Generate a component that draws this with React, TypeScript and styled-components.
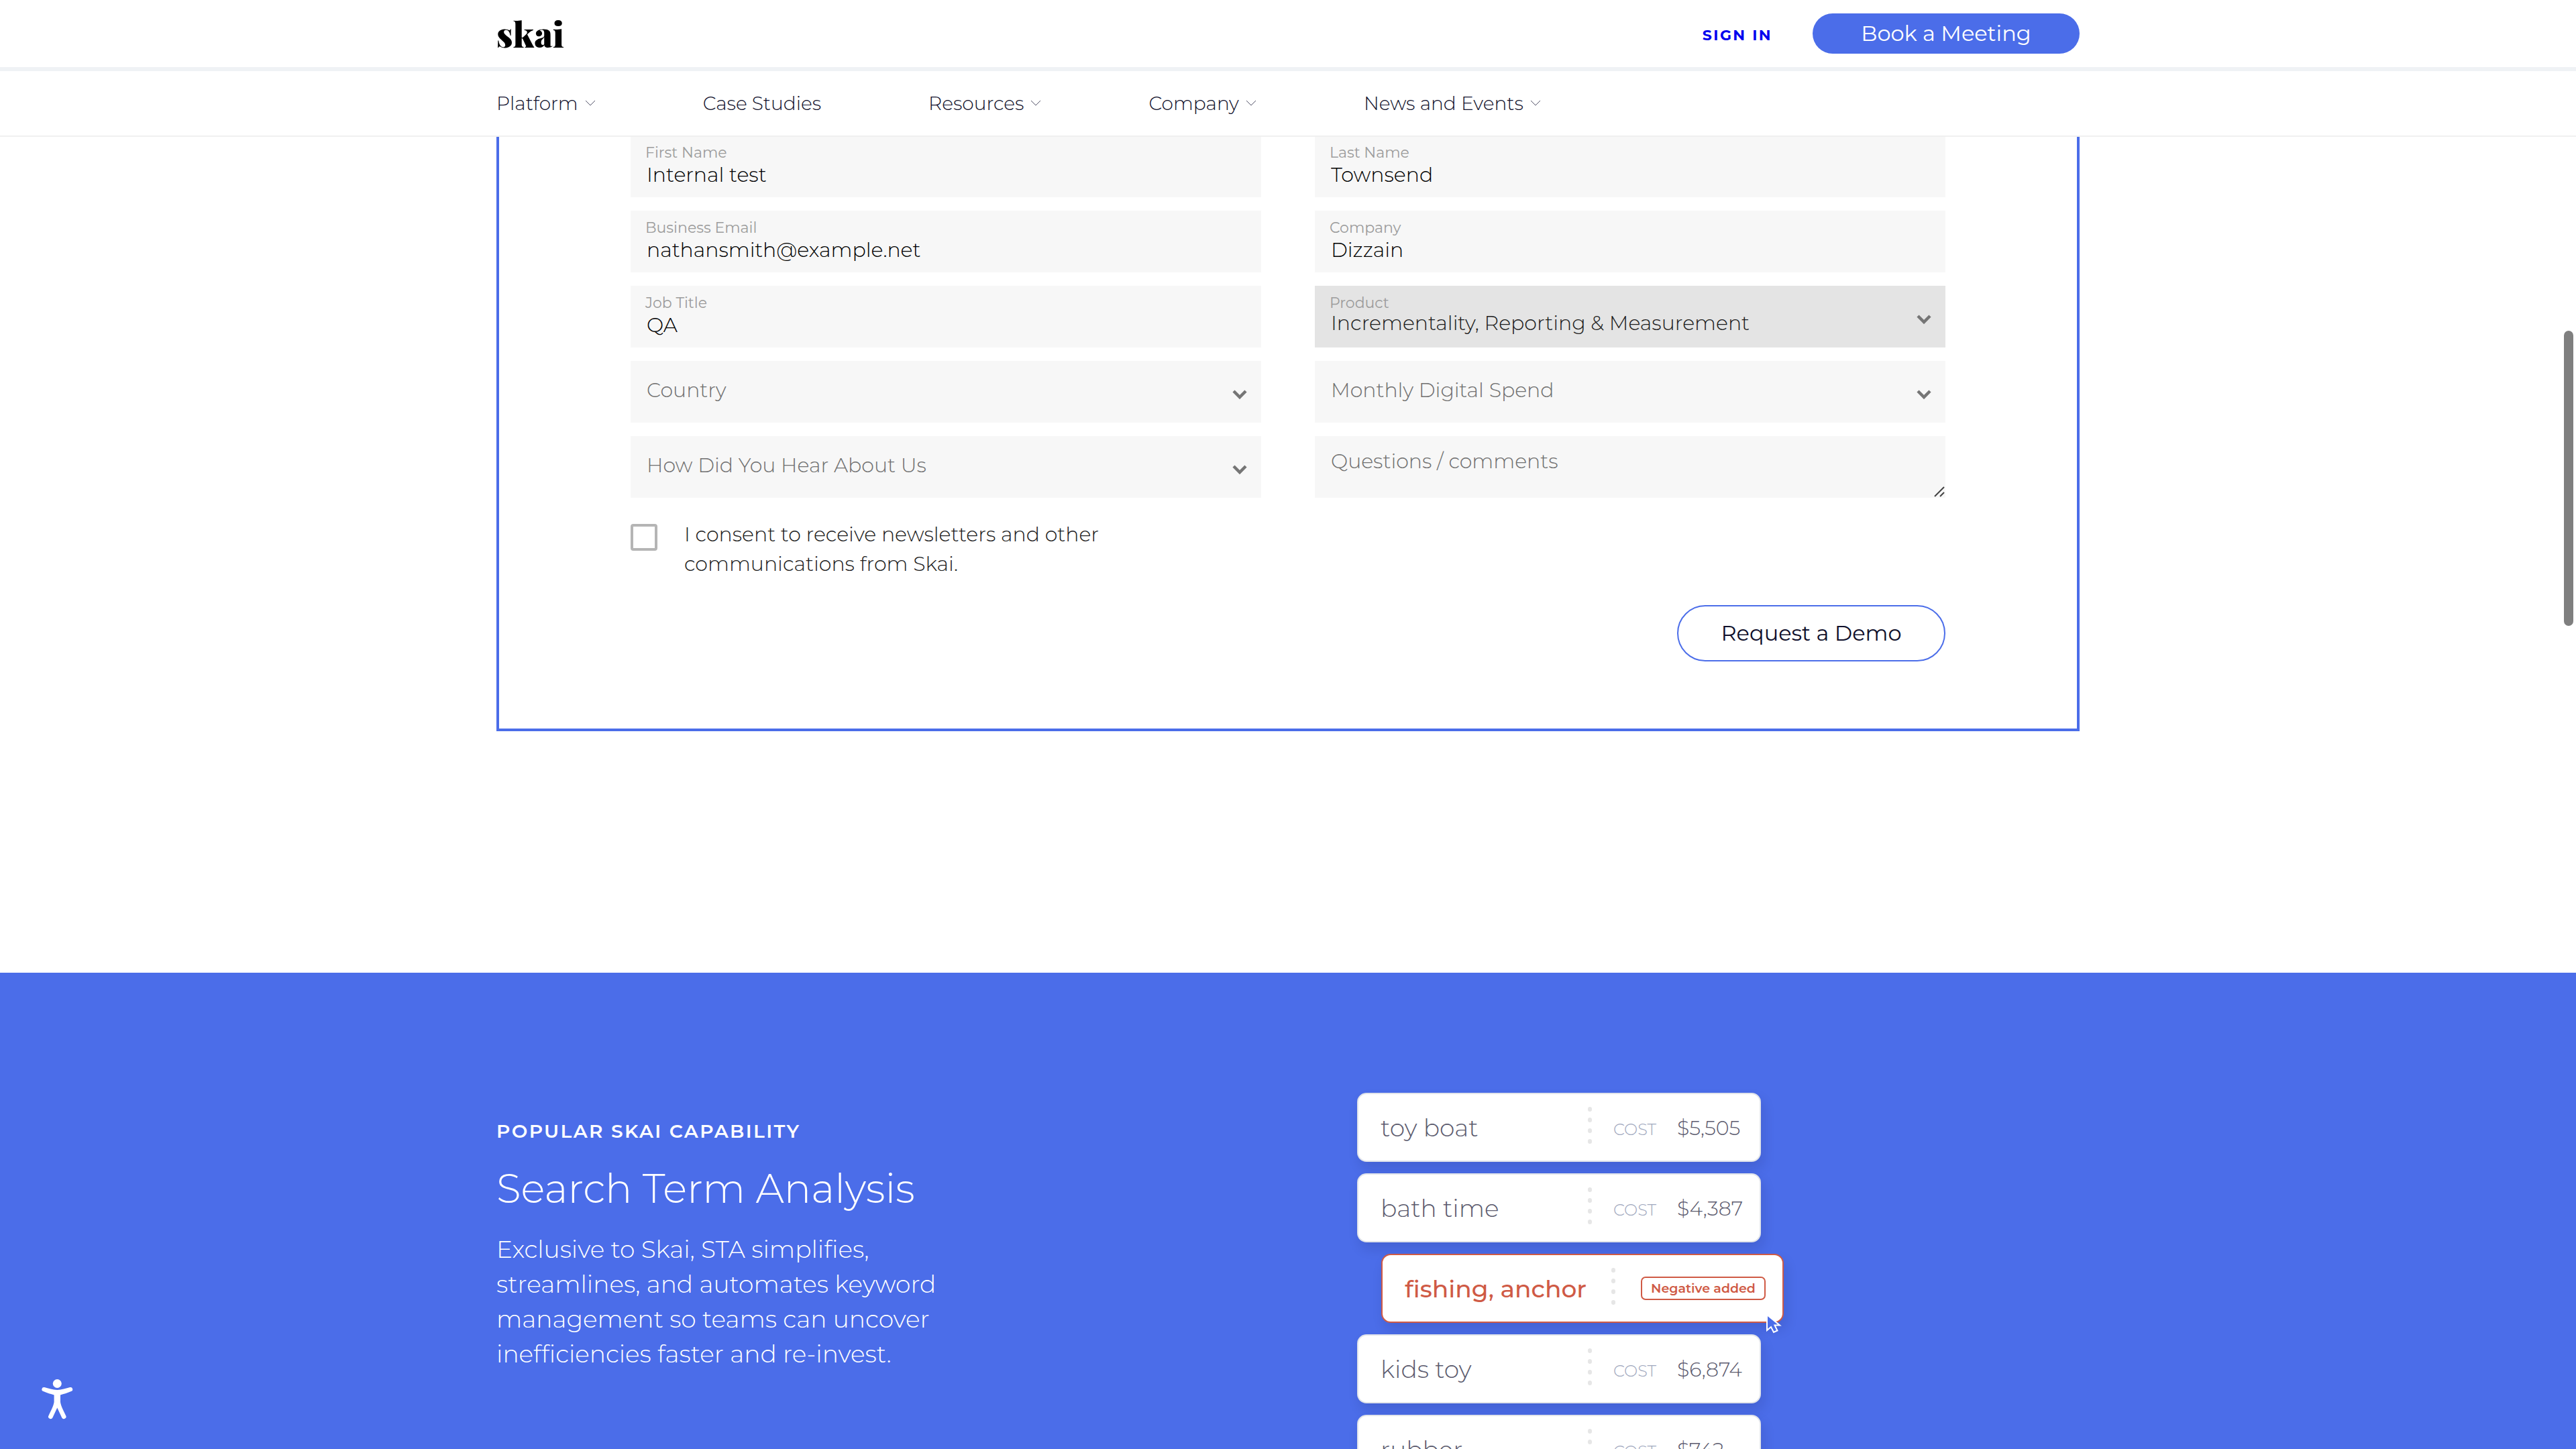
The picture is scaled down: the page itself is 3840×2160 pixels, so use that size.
import React from "react";
import styled, { createGlobalStyle } from "styled-components";

const color = {
  brand: "#4b6de9",
  ink: "#10102b",
  field: "#f7f7f7",
  fieldActive: "#e4e4e4",
  label: "#9c9c9c",
  placeholder: "#707070",
  danger: "#cf5a45",
};

const weight = {
  light: 300,
  book: 350,
  button: 450,
  medium: 500,
  semibold: 600,
  bold: 700,
};

const GlobalStyle = createGlobalStyle`
  *, *::before, *::after { box-sizing: border-box; }
  html, body { margin: 0; padding: 0; }
  body {
    background: #ffffff;
    color: ${color.ink};
    font-family: Montserrat, Inter, "Open Sans", sans-serif;
    overflow: hidden;
  }
  h2, p { margin: 0; }
  button, input, select, textarea { font: inherit; }
`;

const Page = styled.div`
  height: 100vh;
  overflow: hidden;
`;

const Container = styled.div`
  width: calc(100% - 80px);
  max-width: 2360px;
  margin: 0 auto;
`;

/* Header */

const Header = styled.header`
  position: sticky;
  top: 0;
  z-index: 2;
  background: #ffffff;
  border-bottom: 2px solid #f0f0f0;
`;

const TopBar = styled.div`
  border-bottom: 6px solid #eff2f5;
`;

const TopBarRow = styled(Container)`
  display: flex;
  align-items: center;
  justify-content: space-between;
  height: 100px;
`;

const Logo = styled.a`
  color: #000000;
  font-family: "Playfair Display", "Liberation Serif", serif;
  font-size: 52px;
  font-weight: 900;
  line-height: 60px;
  text-decoration: none;
`;

const Actions = styled.div`
  display: flex;
  align-items: center;
  gap: 60px;
`;

const SignIn = styled.a`
  padding-top: 5px;
  color: #0000ee;
  font-size: 22px;
  font-weight: ${weight.bold};
  line-height: 28px;
  letter-spacing: 0.11em;
  text-decoration: none;
`;

const MeetingButton = styled.button`
  width: 398px;
  height: 60px;
  padding: 0;
  border: 0;
  border-radius: 30px;
  background: ${color.brand};
  color: #ffffff;
  font-size: 32px;
  font-weight: ${weight.button};
  line-height: 40px;
`;

const Nav = styled.nav`
  height: 96px;
`;

const NavList = styled(Container)`
  display: flex;
  align-items: center;
  gap: 160px;
  height: 100%;
`;

const NavLink = styled.a`
  display: flex;
  align-items: center;
  gap: 10px;
  color: ${color.ink};
  font-size: 28px;
  font-weight: ${weight.book};
  line-height: 36px;
  text-decoration: none;
  white-space: nowrap;
`;

/* Demo form */

const FormPanel = styled(Container)`
  margin-top: -2px;
  padding: 0 196px 100px;
  border: 4px solid ${color.brand};
  border-top: 0;
`;

const Fields = styled.div`
  display: grid;
  grid-template-columns: 1fr 1fr;
  gap: 20px 80px;
`;

const Field = styled.div`
  position: relative;
  height: 92px;
`;

const FieldLabel = styled.label`
  position: absolute;
  top: 15px;
  left: 22px;
  color: ${color.label};
  font-size: 22px;
  line-height: 22px;
`;

const controlStyle = `
  display: block;
  width: 100%;
  height: 100%;
  margin: 0;
  border: 0;
  border-radius: 0;
  outline: 0;
  font-size: 30px;
  font-weight: ${weight.book};
  line-height: 36px;
`;

const TextInput = styled.input`
  ${controlStyle}
  padding: 24px 24px 0;
  background: ${color.field};
  color: #000000;
`;

const Select = styled.select<{ $active?: boolean }>`
  ${controlStyle}
  appearance: none;
  padding: ${(p) => (p.$active ? "20px 80px 0 24px" : "0 80px 4px 24px")};
  background: ${(p) => (p.$active ? color.fieldActive : color.field)};
  color: ${(p) => (p.$active ? "#1c1c1c" : color.placeholder)};
`;

const TextArea = styled.textarea`
  ${controlStyle}
  padding: 20px 24px;
  background: ${color.field};
  color: #000000;
  resize: none;
  overflow: hidden;
  &::placeholder {
    color: ${color.placeholder};
    opacity: 1;
  }
`;

const SelectArrow = styled.svg`
  position: absolute;
  right: 20px;
  bottom: 34px;
  pointer-events: none;
`;

const ResizeGrip = styled.svg`
  position: absolute;
  right: 1px;
  bottom: 1px;
  pointer-events: none;
`;

const Consent = styled.label`
  display: grid;
  grid-template-columns: 40px 640px;
  gap: 40px;
  margin-top: 33px;
  color: #1c1c1c;
  font-size: 30px;
  font-weight: ${weight.book};
  line-height: 44px;
`;

const Checkbox = styled.input`
  appearance: none;
  width: 40px;
  height: 40px;
  margin: 6px 0 0;
  border: 4px solid #b5b5b5;
  border-radius: 4px;
  background: #ffffff;
`;

const SubmitRow = styled.div`
  display: flex;
  justify-content: flex-end;
  margin-top: 39px;
`;

const SubmitButton = styled.button`
  width: 400px;
  height: 84px;
  padding: 0;
  border: 2px solid ${color.brand};
  border-radius: 42px;
  background: #ffffff;
  color: ${color.ink};
  font-size: 32px;
  font-weight: ${weight.button};
  line-height: 40px;
`;

/* Capability section */

const Capability = styled.section`
  margin-top: 360px;
  padding: 179px 0;
  background: ${color.brand};
  color: #ffffff;
`;

const CapabilityGrid = styled(Container)`
  display: grid;
  grid-template-columns: 1fr 1fr;
  align-items: start;
`;

const Copy = styled.div`
  display: grid;
  justify-items: start;
  padding-top: 39px;
`;

const Eyebrow = styled.p`
  font-size: 28px;
  font-weight: ${weight.semibold};
  line-height: 36px;
  letter-spacing: 0.085em;
  text-transform: uppercase;
`;

const Title = styled.h2`
  margin-top: 32px;
  font-size: 60px;
  font-weight: ${weight.light};
  line-height: 72px;
`;

const Lead = styled.p`
  max-width: 680px;
  margin-top: 28px;
  font-size: 36px;
  font-weight: ${weight.light};
  line-height: 52px;
  font-variant-ligatures: none;
`;

const TermList = styled.ul`
  display: grid;
  gap: 17px;
  margin: 0;
  padding: 0 0 0 103px;
  list-style: none;
`;

const Term = styled.li<{ $negative?: boolean }>`
  position: relative;
  display: grid;
  grid-template-columns: ${(p) => (p.$negative ? "308px" : "309px")} 38px 95px auto;
  align-items: center;
  width: ${(p) => (p.$negative ? "600px" : "602px")};
  height: 103px;
  margin-left: ${(p) => (p.$negative ? "36px" : "0")};
  padding-left: 33px;
  border: 2px solid ${(p) => (p.$negative ? color.danger : "#e1e4ea")};
  border-radius: 14px;
  background: #ffffff;
  box-shadow: 4px 10px 18px rgba(20, 20, 60, 0.12);
  color: ${(p) => (p.$negative ? color.danger : "#5c5b6e")};
  font-weight: ${(p) => (p.$negative ? weight.medium : weight.light)};
`;

const TermName = styled.span`
  font-size: 36px;
  line-height: 44px;
`;

const CostLabel = styled.span`
  padding-top: 6px;
  color: #9fa8bd;
  font-size: 24px;
  line-height: 30px;
`;

const Price = styled.span`
  padding-top: 3px;
  font-size: 30px;
  line-height: 36px;
`;

const Dots = styled.span`
  display: grid;
  gap: 9px;
  width: 6px;
  margin-bottom: 6px;
  &::before, &::after { content: ""; }
  &::before, &::after, i {
    display: block;
    height: 7px;
    border-radius: 3px;
    background: #e6e6e6;
  }
`;

const Badge = styled.span`
  grid-column: 3 / -1;
  justify-self: end;
  width: 186px;
  margin-right: 25px;
  border: 2px solid ${color.danger};
  border-radius: 7px;
  font-size: 19px;
  font-weight: ${weight.semibold};
  line-height: 31px;
  text-align: center;
`;

const Cursor = styled.svg`
  position: absolute;
  right: 1px;
  bottom: -20px;
`;

/* Overlays */

const AccessibilityButton = styled.button`
  position: fixed;
  left: 60px;
  bottom: 40px;
  z-index: 3;
  width: 50px;
  height: 66px;
  padding: 0;
  border: 0;
  background: transparent;
`;

const ScrollThumb = styled.div`
  position: fixed;
  top: 493px;
  right: 4px;
  z-index: 3;
  width: 14px;
  height: 440px;
  border-radius: 7px;
  background: #7f7f7f;
`;

const navItems = [
  { text: "Platform", menu: true },
  { text: "Case Studies", menu: false },
  { text: "Resources", menu: true },
  { text: "Company", menu: true },
  { text: "News and Events", menu: true },
];

const terms = [
  { name: "toy boat", cost: "$5,505" },
  { name: "bath time", cost: "$4,387" },
  { name: "fishing, anchor", negative: true },
  { name: "kids toy", cost: "$6,874" },
  { name: "rubber", cost: "$742" },
];

function NavChevron() {
  return (
    <svg width="16" height="10" viewBox="0 0 16 10" fill="none" aria-hidden="true">
      <path d="M1 1l7 7 7-7" stroke="#55556a" strokeWidth="1" />
    </svg>
  );
}

function Arrow() {
  return (
    <SelectArrow width="24" height="16" viewBox="0 0 24 16" fill="none" aria-hidden="true">
      <path d="M3 3l9 9 9-9" stroke="#757575" strokeWidth="4.500" />
    </SelectArrow>
  );
}

function InputField(props: { id: string; label: string; value: string; type?: string }) {
  return (
    <Field>
      <TextInput id={props.id} type={props.type || "text"} defaultValue={props.value} />
      <FieldLabel htmlFor={props.id}>{props.label}</FieldLabel>
    </Field>
  );
}

function EmptySelect(props: { text: string }) {
  return (
    <Field>
      <Select aria-label={props.text}>
        <option>{props.text}</option>
      </Select>
      <Arrow />
    </Field>
  );
}

export default function App() {
  return (
    <Page>
      <GlobalStyle />
      <Header>
        <TopBar>
          <TopBarRow>
            <Logo href="#">skai</Logo>
            <Actions>
              <SignIn href="#">SIGN IN</SignIn>
              <MeetingButton type="button">Book a Meeting</MeetingButton>
            </Actions>
          </TopBarRow>
        </TopBar>
        <Nav>
          <NavList>
            {navItems.map((item) => (
              <NavLink key={item.text} href="#">
                {item.text}
                {item.menu && <NavChevron />}
              </NavLink>
            ))}
          </NavList>
        </Nav>
      </Header>

      <main>
        <FormPanel as="form">
          <Fields>
            <InputField id="first-name" label="First Name" value="Internal test" />
            <InputField id="last-name" label="Last Name" value="Townsend" />
            <InputField id="email" label="Business Email" value="nathansmith@example.net" type="email" />
            <InputField id="company" label="Company" value="Dizzain" />
            <InputField id="job-title" label="Job Title" value="QA" />
            <Field>
              <Select id="product" $active>
                <option>Incrementality, Reporting &amp; Measurement</option>
              </Select>
              <FieldLabel htmlFor="product">Product</FieldLabel>
              <Arrow />
            </Field>
            <EmptySelect text="Country" />
            <EmptySelect text="Monthly Digital Spend" />
            <EmptySelect text="How Did You Hear About Us" />
            <Field>
              <TextArea aria-label="Questions / comments" placeholder="Questions / comments" />
              <ResizeGrip width="16" height="16" viewBox="0 0 16 16" fill="none" aria-hidden="true">
                <path d="M1 15L15 1M9 15l6-6" stroke="#444444" strokeWidth="2" />
              </ResizeGrip>
            </Field>
          </Fields>
          <Consent>
            <Checkbox type="checkbox" />
            <span>I consent to receive newsletters and other communications from Skai.</span>
          </Consent>
          <SubmitRow>
            <SubmitButton type="button">Request a Demo</SubmitButton>
          </SubmitRow>
        </FormPanel>

        <Capability>
          <CapabilityGrid>
            <Copy>
              <Eyebrow>Popular Skai capability</Eyebrow>
              <Title>Search Term Analysis</Title>
              <Lead>
                Exclusive to Skai, STA simplifies, streamlines, and automates keyword management so
                teams can uncover inefficiencies faster and re-invest.
              </Lead>
            </Copy>
            <TermList>
              {terms.map((term) => (
                <Term key={term.name} $negative={term.negative}>
                  <TermName>{term.name}</TermName>
                  <Dots>
                    <i />
                    <i />
                  </Dots>
                  {term.negative ? (
                    <>
                      <Badge>Negative added</Badge>
                      <Cursor width="24" height="32" viewBox="0 0 24 32" aria-hidden="true">
                        <path
                          d="M2 2v23l6-5 4 8 5.500-2.500-4-8h7.500z"
                          fill={color.brand}
                          stroke="#ffffff"
                          strokeWidth="2"
                        />
                      </Cursor>
                    </>
                  ) : (
                    <>
                      <CostLabel>COST</CostLabel>
                      <Price>{term.cost}</Price>
                    </>
                  )}
                </Term>
              ))}
            </TermList>
          </CapabilityGrid>
        </Capability>
      </main>

      <AccessibilityButton type="button" aria-label="Accessibility">
        <svg width="50" height="66" viewBox="60 2054 50 66" aria-hidden="true">
          <circle cx="85.300" cy="2062.500" r="6.500" fill="#ffffff" />
          <path
            d="M66.300 2068.100C72 2069.500 79 2072 85.300 2072S98.500 2069.500 104.300 2068.100A3 3 0 0 1 106 2074C100 2076.500 95 2078 90 2079.500V2090C91 2097 95 2103 98 2110A3 3 0 0 1 92.300 2113.500L85.300 2098.500 78.300 2113.500A3 3 0 0 1 72.600 2110C75.600 2103 79.600 2097 80.600 2090V2079.500C75.600 2078 70.600 2076.500 64.600 2074A3 3 0 0 1 66.300 2068.100Z"
            fill="#ffffff"
          />
        </svg>
      </AccessibilityButton>
      <ScrollThumb />
    </Page>
  );
}
